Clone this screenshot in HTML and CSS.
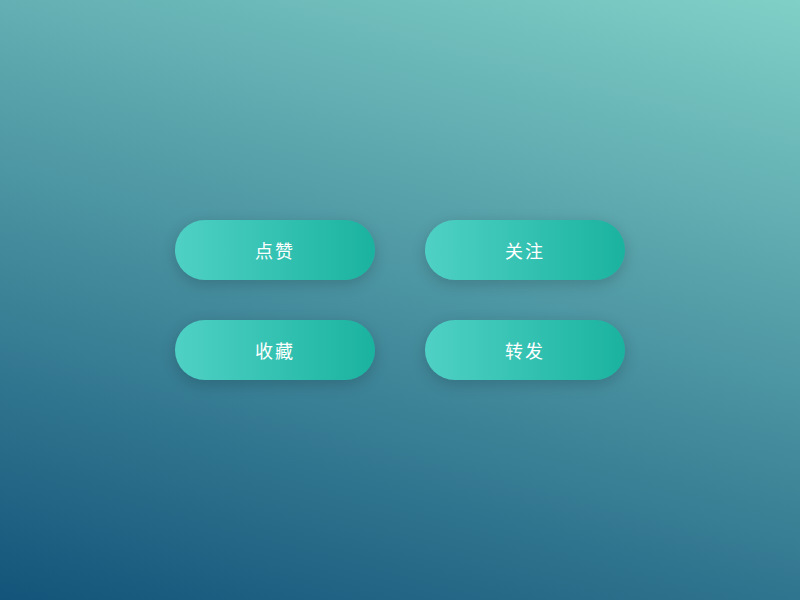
FILE: index.html
```html
<!DOCTYPE html>
<html lang="zh-CN">
<head>
<meta charset="utf-8">
<title>按钮</title>
<link rel="stylesheet" href="styles.css">
</head>
<body>
<div class="grid">
  <button class="btn">点赞</button>
  <button class="btn">关注</button>
  <button class="btn">收藏</button>
  <button class="btn">转发</button>
</div>
</body>
</html>
```
FILE: styles.css
```css
html, body {
  margin: 0;
  height: 100%;
}
body {
  background: linear-gradient(15deg, #13547a 0%, #80d0c7 100%);
  display: flex;
  align-items: center;
  justify-content: center;
  font-family: "Noto Sans CJK SC", "Noto Sans", sans-serif;
}
.grid {
  display: grid;
  grid-template-columns: 200px 200px;
  column-gap: 50px;
  row-gap: 40px;
}
.btn {
  width: 200px;
  height: 60px;
  border: none;
  border-radius: 30px;
  background: linear-gradient(to right, #4fd1c5, #1ab39f);
  color: #fff;
  font-family: inherit;
  font-size: 18px;
  letter-spacing: 2px;
  box-shadow: 0 4px 15px rgba(0, 0, 0, 0.18);
  padding: 0;
  cursor: pointer;
}
```
